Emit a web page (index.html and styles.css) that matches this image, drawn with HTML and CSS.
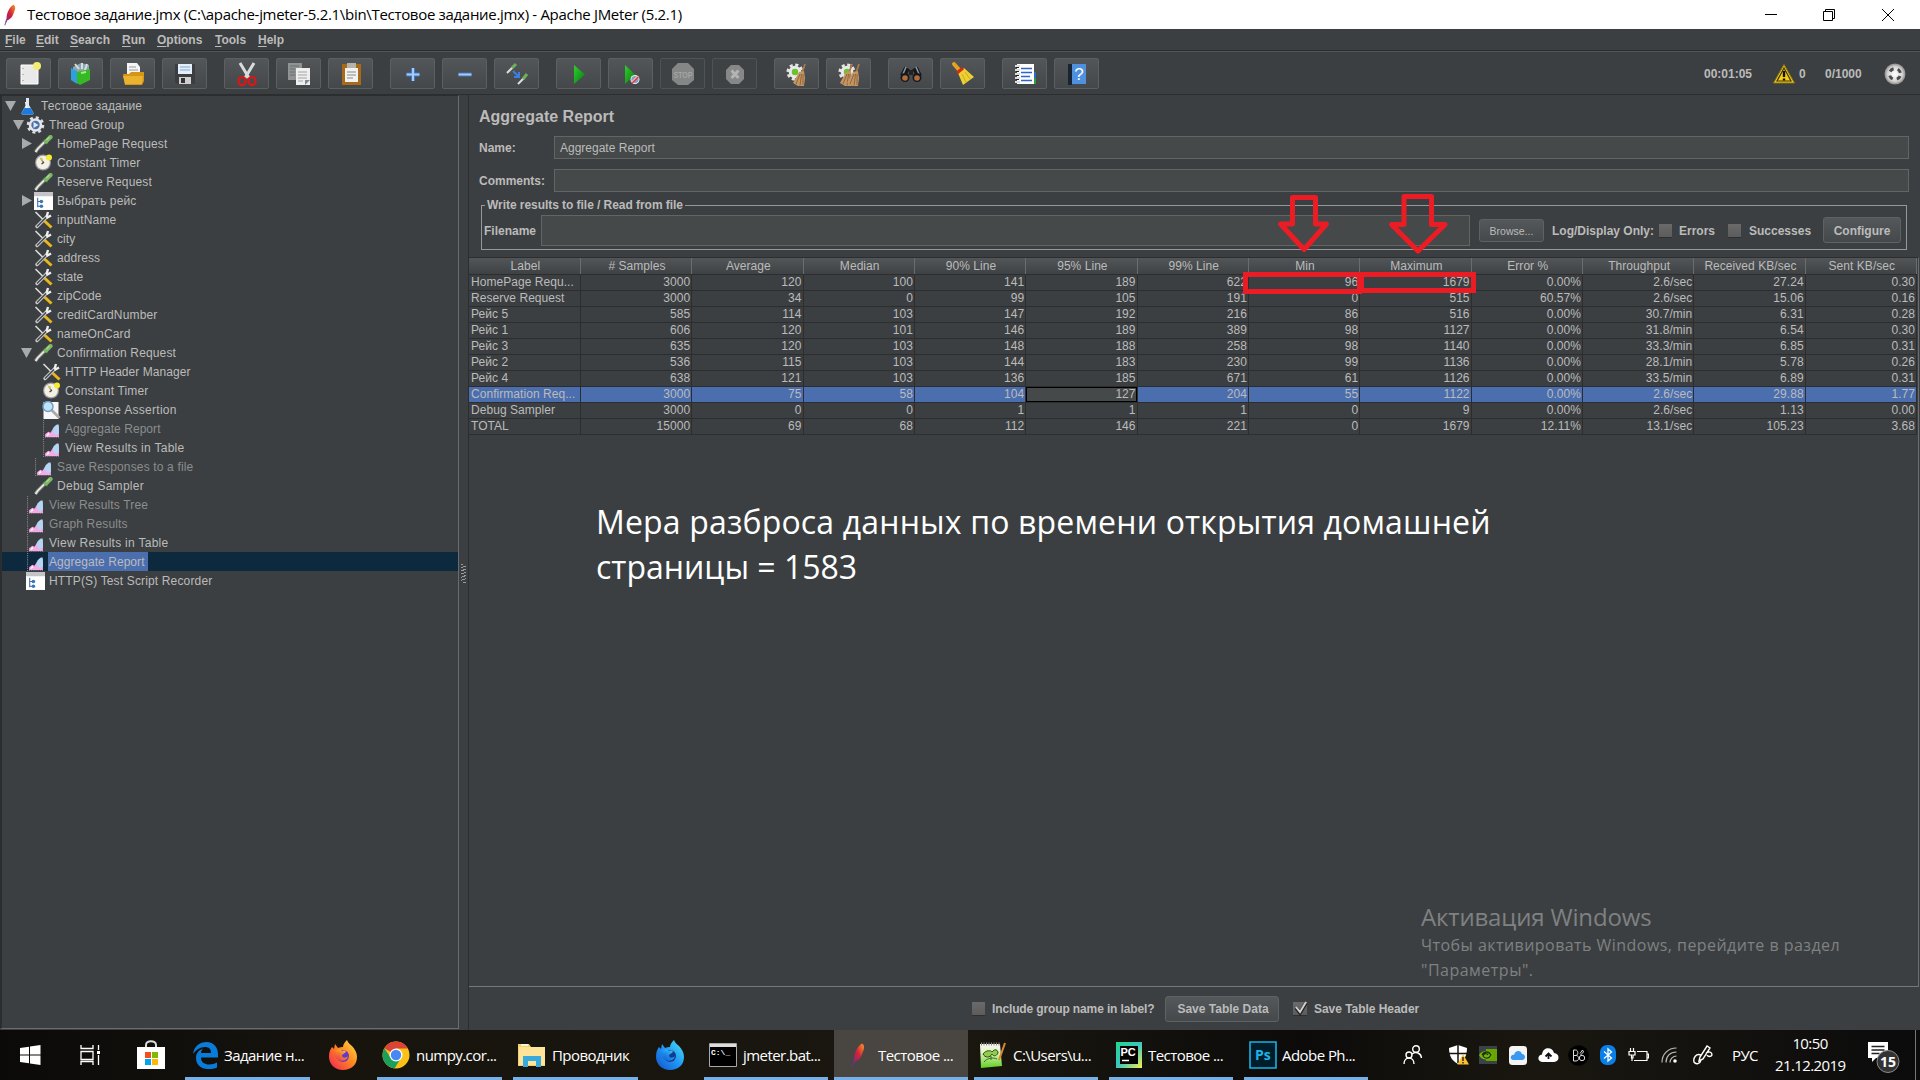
FILE: index.html
```html
<!DOCTYPE html>
<html lang="ru">
<head>
<meta charset="utf-8">
<title>Apache JMeter</title>
<link rel="stylesheet" href="styles.css">
</head>
<body>
<svg class="defs" width="0" height="0">
<defs>
<linearGradient id="gFeather" x1="0" y1="1" x2="1" y2="0"><stop offset="0" stop-color="#6b2d91"/><stop offset=".5" stop-color="#d3203a"/><stop offset="1" stop-color="#f79a23"/></linearGradient>
<linearGradient id="gGreen" x1="0" y1="0" x2="1" y2="1"><stop offset="0" stop-color="#2fd02f"/><stop offset="1" stop-color="#067a0c"/></linearGradient>
<linearGradient id="gFox" x1="1" y1="0" x2="0" y2="1"><stop offset="0" stop-color="#ffe14a"/><stop offset=".45" stop-color="#ff8a1e"/><stop offset="1" stop-color="#f01e5a"/></linearGradient>
<linearGradient id="gFoxDev" x1="1" y1="0" x2="0" y2="1"><stop offset="0" stop-color="#4fe6f0"/><stop offset=".5" stop-color="#1e96f5"/><stop offset="1" stop-color="#1550c8"/></linearGradient>
<linearGradient id="gNpp" x1="0" y1="0" x2="0" y2="1"><stop offset="0" stop-color="#f8faf2"/><stop offset=".35" stop-color="#e3f2c4"/><stop offset="1" stop-color="#5fd01c"/></linearGradient>
<linearGradient id="gPc" x1="0" y1="0" x2="1" y2="1"><stop offset="0" stop-color="#21d789"/><stop offset=".5" stop-color="#3cc7c0"/><stop offset="1" stop-color="#f6f14b"/></linearGradient>
<radialGradient id="gBall"><stop offset="0" stop-color="#fff"/><stop offset=".7" stop-color="#d4d4d4"/><stop offset="1" stop-color="#8a8a8a"/></radialGradient>
<symbol id="feather" viewBox="0 0 14 24"><path d="M2 22 3 16C3 10 6 3 11 0c2 1 3 4 1 8-2 6-4 9-8 10z" fill="url(#gFeather)"/><path d="M1 24 3 17" stroke="#6b2d91" stroke-width="1"/></symbol>
<symbol id="pipette" viewBox="0 0 18 18"><path d="M1 17 3 14 11 6" stroke="#8b9085" stroke-width="3.400" fill="none"/><path d="M1 17 3.500 13.500 11 6" stroke="#eee" stroke-width="1.500" fill="none"/><path d="M9 5 13 9" stroke="#3f7a35" stroke-width="2"/><path d="M11.500 6.500 16 2" stroke="#7fb568" stroke-width="4.200" stroke-linecap="round"/><path d="M12 5 15 2" stroke="#a9d98f" stroke-width="1.200"/></symbol>
<symbol id="tools" viewBox="0 0 18 18"><path d="M1 1 10 10" stroke="#ddd" stroke-width="1.600"/><path d="M10 10 17 16.500" stroke="#e8b71a" stroke-width="3"/><path d="M2.500 15.500 12 6" stroke="#c9c9c9" stroke-width="3.400" stroke-linecap="round"/><path d="M2.500 15.500 12 6" stroke="#44484a" stroke-width="1.400"/><path d="M12 7 16.500 4.500M12 6 13.500 1" stroke="#eee" stroke-width="2.400"/></symbol>
<symbol id="timer" viewBox="0 0 18 18"><circle cx="8.500" cy="8.500" r="8" fill="#9c98a4"/><circle cx="8.500" cy="8.500" r="6.800" fill="#f3f0e4"/><path d="M6 4 9 8.500 7 10" stroke="#444" stroke-width="1.300" fill="none"/><path d="M5 4 8 4 8.500 8z" fill="#d8c95a"/><circle cx="14.500" cy="3.500" r="3" fill="#f6ec32"/></symbol>
<symbol id="window" viewBox="0 0 18 17"><path d="M0 0h18v17H0z" fill="#fff"/><path d="M0 0h18v4H0z" fill="#c3c3c8"/><path d="M3.500 5.500v9M3.500 9h3M3.500 13.500h3" stroke="#3a6ea8"/><circle cx="7" cy="9" r="1.700" fill="#3878b8"/><circle cx="7" cy="13.500" r="1.700" fill="#3878b8"/></symbol>
<symbol id="listener" viewBox="0 0 16 17"><path d="M.5 0v16.500H15" stroke="#8a7f8a" stroke-dasharray="1 1" fill="none"/><path d="M2 16V13.500L5 11 7 12 9 9 11 12 15 8v8z" fill="#f5a9e6"/><path d="M9 9C10 6 12 4.500 14.500 4L15 6v7l-3 1.500-2-2z" fill="#b5d5f5"/><path d="M3 15 5 12 6 14z" fill="#fff"/></symbol>
<symbol id="assertion" viewBox="0 0 18 18"><path d="M1 1h15v17H1z" fill="#f7f7f7"/><path d="M9 9 17 17" stroke="#aaa" stroke-width="2.600"/><circle cx="5.500" cy="5.500" r="5" fill="#bfe3fa" stroke="#6d9bc0" stroke-width="1.400"/></symbol>
<symbol id="flask" viewBox="0 0 14 18"><path d="M5.500 1h3v7L13 16c0 1-.5 1.500-1.500 1.500h-9C1.500 17.500 1 17 1 16L5.500 8z" fill="#dfe9f3"/><path d="M4 11h6l3 5c0 1-.5 1.500-1.500 1.500h-9C1.500 17.500 1 17 1 16z" fill="#1d7be0"/><path d="M5 5 6 11" stroke="#fff"/></symbol>
<symbol id="gear" viewBox="0 0 18 18"><circle cx="9" cy="9" r="7.500" fill="none" stroke="#dcdfe3" stroke-width="2.600" stroke-dasharray="3 2.890"/><circle cx="9" cy="9" r="5.500" fill="#4a6ea8" stroke="#e4e6ea" stroke-width="2.600"/><path d="M7 6 12 9 7 12z" fill="#dbe9ff"/></symbol>
<symbol id="open" viewBox="0 0 12 12"><path d="M0 1H11L5.500 11z" fill="#a8aaab"/></symbol>
<symbol id="closed" viewBox="0 0 12 12"><path d="M1 0V11L11 5.500z" fill="#a8aaab"/></symbol>
<symbol id="broom" viewBox="0 0 14 24"><path d="M10 10 13 1" stroke="#a97a48" stroke-width="1.800"/><path d="M7 9 12 8 13 15 12 23 6 23 1 20z" fill="#c39764"/><path d="M8 11 4 21M9.500 11 8 22.500M11 11v11" stroke="#916539" stroke-width="1"/></symbol>
<symbol id="gear2" viewBox="0 0 20 20"><circle cx="10" cy="10" r="8" fill="none" stroke="#e6e6e6" stroke-width="3" stroke-dasharray="3.500 2.780"/><circle cx="10" cy="10" r="7" fill="#e9e9e9"/><circle cx="10" cy="10" r="3.600" fill="#6bc22c"/></symbol>
<symbol id="fox" viewBox="0 0 28 30"><path d="M18 0c1 3 3 4 5 6 3 3 5 7 5 11 0 8-6 13-14 13S0 24 0 17c0-5 1-7 3-10l2 2 1-5 3 4c2-1 4-1 5-1 0-3 2-5 4-7z"/><circle cx="14" cy="16" r="6" fill="#6a35c9"/><path d="M5 12c2-3 6-3 8-1 2-1 4 0 4 1l-4 3c0 4 5 3 6 1-1 6-11 7-13 0z" opacity=".9"/></symbol>
<symbol id="foxdev" viewBox="0 0 28 30"><path d="M18 0c1 3 3 4 5 6 3 3 5 7 5 11 0 8-6 13-14 13S0 24 0 17c0-5 1-7 3-10l2 2 1-5 3 4c2-1 4-1 5-1 0-3 2-5 4-7z"/><circle cx="14" cy="16" r="6" fill="#123a92"/><path d="M5 12c2-3 6-3 8-1 2-1 4 0 4 1l-4 3c0 4 5 3 6 1-1 6-11 7-13 0z" opacity=".9"/></symbol>
</defs>
</svg>

<header class="titlebar">
  <svg class="app-icon" width="12" height="22"><use href="#feather"/></svg>
  <span class="app-title">Тестовое задание.jmx (C:\apache-jmeter-5.2.1\bin\Тестовое задание.jmx) - Apache JMeter (5.2.1)</span>
  <svg class="win-buttons" width="132" height="14" fill="none" stroke="#000"><path d="M1 6.500h12M59.500 3.500h9v9h-9zM61.500 3.500v-2h9v9h-2M118 1l12 12M130 1l-12 12"/></svg>
</header>

<nav class="menubar">
  <span class="m1"><u>F</u>ile</span><span class="m2"><u>E</u>dit</span><span class="m3"><u>S</u>earch</span><span class="m4"><u>R</u>un</span><span class="m5"><u>O</u>ptions</span><span class="m6"><u>T</u>ools</span><span class="m7"><u>H</u>elp</span>
</nav>

<div class="toolbar">
  <div class="group">
    <button><svg width="28" height="28"><path d="M6 5h17v19H6z" fill="#e9e9e9" stroke="#fff"/><path d="M8 8v14" stroke="#888" stroke-dasharray="1 5"/><circle cx="22" cy="6" r="4" fill="#f4ec74"/></svg></button>
    <button><svg width="28" height="28"><path d="M6 7 14 3l8 2v8H6z" fill="#8fa5ad"/><path d="M8 4 12 9M15 3v6M20 4l-2 6" stroke="#d5e0e2" stroke-width="2"/><path d="M4 8 10 11v13l-6-4z" fill="#2ea0dd"/><path d="M10 12 23 9v11l-10 5-3-2z" fill="#37b926"/><path d="M14 13 19 12" stroke="#a3ee7b" stroke-width="2" fill="none"/></svg></button>
    <button><svg width="28" height="28"><path d="M8 3h10l3 4v9H8z" fill="#f5f5f5"/><path d="M10 7h7M10 10h9" stroke="#999"/><path d="M4 14h6l2-2h13v9l-2 4H6z" fill="#d69512"/><path d="M4 16h20l-1 8H6z" fill="#eab22e"/></svg></button>
    <button><svg width="28" height="28"><path d="M4 4h20v20H6l-2-2z" fill="#3b3d40"/><path d="M7 4h14v10H7z" fill="#e3eefa"/><path d="M9 7h10M9 10h10" stroke="#86a9cc"/><path d="M8 17h12v7H8z" fill="#cfcfcf"/><path d="M10 18h4v5h-4z" fill="#333"/></svg></button>
  </div>
  <div class="group">
    <button><svg width="28" height="28"><path d="M7 3 16 18M21 3 12 18" stroke="#d9dcdc" stroke-width="3"/><ellipse cx="9" cy="21" rx="3.500" ry="4" fill="none" stroke="#d11a1a" stroke-width="2.500"/><ellipse cx="19" cy="21" rx="3.500" ry="4" fill="none" stroke="#d11a1a" stroke-width="2.500"/></svg></button>
    <button><svg width="28" height="28"><path d="M3 3h14v17H3z" fill="#8f9394"/><path d="M11 8h14v17H11z" fill="#efefef"/><path d="M5 6h9M5 9h5M5 12h5M5 15h5" stroke="#6b6f70"/><path d="M13 12h9M13 15h9M13 18h9M13 21h5" stroke="#a3a3a3"/><path d="M20 25v-5h5z" fill="#888"/></svg></button>
    <button><svg width="28" height="28"><path d="M5 4h19v21H5z" fill="#a96a18"/><path d="M8 8h13v14H8z" fill="#f2f2f2"/><path d="M10 12h9M10 15h9M10 18h6" stroke="#888"/><path d="M10 3h9v5h-9z" fill="#b4b4aa"/></svg></button>
  </div>
  <div class="group">
    <button><svg width="28" height="28"><path d="M14 8v13M7.500 14.500h13" stroke="#4179c5" stroke-width="4"/><path d="M14 8v13M7.500 14.500h13" stroke="#a5cbf7" stroke-width="2"/></svg></button>
    <button><svg width="28" height="28"><path d="M7.500 14.500h13" stroke="#4179c5" stroke-width="4"/><path d="M7.500 14.500h13" stroke="#a5cbf7" stroke-width="2"/></svg></button>
    <button><svg width="28" height="28"><path d="M4 13 12 5" stroke="#ddd" stroke-width="2"/><path d="M9 8 13 4" stroke="#6fae5a" stroke-width="3"/><path d="M15 24 22 17" stroke="#ddd" stroke-width="2"/><path d="M20 19 24 14" stroke="#6fae5a" stroke-width="3"/><path d="M10 11 15 16M16 12v5h-5" stroke="#3b7fe0" stroke-width="2" fill="none"/></svg></button>
  </div>
  <div class="group">
    <button><svg width="28" height="28"><path d="M9 5 20 14.500 9 24z" fill="url(#gGreen)"/></svg></button>
    <button><svg width="28" height="28"><path d="M8 5 18 14.500 8 24z" fill="url(#gGreen)"/><circle cx="18" cy="19.500" r="4.500" fill="#eee"/><circle cx="18" cy="19.500" r="3.600" fill="#7ba0ca"/><path d="M15 22.500 21 16.500" stroke="#e33" stroke-width="2.400"/><path d="M14.500 22 20.500 16" stroke="#fff"/></svg></button>
    <button class="off"><svg width="28" height="28"><path d="M9 3h10l6 6v11l-6 5H9l-6-5V9z" fill="#858686"/><text x="14" y="18" class="stop-label" textLength="19" lengthAdjust="spacingAndGlyphs">STOP</text></svg></button>
    <button class="off"><svg width="28" height="28"><path d="M10 5h8l5 5v9l-5 5h-8l-5-5v-9z" fill="#868787"/><path d="M10.500 10.500 17.500 18M17.500 10.500 10.500 18" stroke="#b4b4b4" stroke-width="3"/></svg></button>
  </div>
  <div class="group">
    <button><svg width="28" height="28"><use href="#gear2" x="3" y="3" width="18" height="18"/><use href="#broom" x="9" y="3" width="14" height="24"/></svg></button>
    <button><svg width="28" height="28"><use href="#gear2" x="3" y="3" width="18" height="18"/><use href="#broom" x="4" y="3" width="14" height="24"/><use href="#broom" x="11" y="3" width="14" height="24"/></svg></button>
  </div>
  <div class="group">
    <button><svg width="28" height="28"><path d="M10 8 6 16M18 8 22 16" stroke="#15171a" stroke-width="6"/><path d="M9 7 6 14M19 7 22 14" stroke="#8d98a5" stroke-width="1.500"/><path d="M12 10h4v5h-4z" fill="#222"/><circle cx="8" cy="17.500" r="4.500" fill="#16181b"/><circle cx="20" cy="17.500" r="4.500" fill="#16181b"/><circle cx="8" cy="18" r="2.800" fill="#b06c39"/><circle cx="20" cy="18" r="2.800" fill="#b06c39"/></svg></button>
    <button><svg width="28" height="28"><path d="M5 4 11 11" stroke="#e6a31d" stroke-width="4" stroke-linecap="round"/><path d="M9 13 15 8 25 17 14 25z" fill="#efd032"/><path d="M8 13 14 8" stroke="#d02a18" stroke-width="3"/><path d="M13 14 17 22M16 12 21 19" stroke="#c9aa1d"/></svg></button>
  </div>
  <div class="group">
    <button><svg width="28" height="28"><path d="M22 12h3v12h-3z" fill="#2c6cc4"/><path d="M22 18h3v6h-3z" fill="#2da035"/><path d="M6 4h17v20H6z" fill="#fff"/><path d="M10 8.500h11M10 12.500h11M10 16.500h9M10 20.500h11" stroke="#2e65c8" stroke-width="1.400"/><path d="M4 6h5M4 10h5M4 14h5M4 18h5M4 22h5" stroke="#ddd" stroke-width="2"/><path d="M5 7.500h3M5 11.500h3M5 15.500h3M5 19.500h3" stroke="#222"/></svg></button>
    <button><svg width="28" height="28"><path d="M5 4h4v21H5z" fill="#182334"/><path d="M9 4h14v20H9z" fill="#4f90df"/><text x="16" y="20" class="help-label">?</text></svg></button>
  </div>
  <div class="status">
    <span class="elapsed">00:01:05</span>
    <svg class="warn" width="24" height="22"><path d="M12 1.500 22.500 20h-21z" fill="#f6cd17" stroke="#8a7515"/><path d="M12 5 19 18H5z" fill="none" stroke="#3b330a" stroke-width="1.200"/><path d="M12 8v6M12 15.500v2" stroke="#111" stroke-width="2.400"/></svg>
    <span class="errors">0</span>
    <span class="threads">0/1000</span>
    <svg class="ball" width="22" height="22"><circle cx="11" cy="11" r="10.500" fill="url(#gBall)"/><circle cx="11" cy="11" r="5.500" fill="none" stroke="#4b4b4b" stroke-width="3" stroke-dasharray="4.300 4.340" stroke-dashoffset="-2.200"/></svg>
  </div>
</div>

<main class="main">
  <aside class="tree">
    <div class="node d0"><svg class="tw"><use href="#open"/></svg><svg class="ic"><use href="#flask"/></svg><span>Тестовое задание</span></div>
    <div class="node d1"><svg class="tw"><use href="#open"/></svg><svg class="ic"><use href="#gear"/></svg><span>Thread Group</span></div>
    <div class="node d2"><svg class="tw"><use href="#closed"/></svg><svg class="ic"><use href="#pipette"/></svg><span class="wide">HomePage Request</span></div>
    <div class="node d2"><i class="tw"></i><svg class="ic"><use href="#timer"/></svg><span class="wide">Constant Timer</span></div>
    <div class="node d2"><i class="tw"></i><svg class="ic"><use href="#pipette"/></svg><span class="wide">Reserve Request</span></div>
    <div class="node d2"><svg class="tw"><use href="#closed"/></svg><svg class="ic"><use href="#window"/></svg><span class="wide">Выбрать рейс</span></div>
    <div class="node d2"><i class="tw"></i><svg class="ic"><use href="#tools"/></svg><span class="wide">inputName</span></div>
    <div class="node d2"><i class="tw"></i><svg class="ic"><use href="#tools"/></svg><span>city</span></div>
    <div class="node d2"><i class="tw"></i><svg class="ic"><use href="#tools"/></svg><span>address</span></div>
    <div class="node d2"><i class="tw"></i><svg class="ic"><use href="#tools"/></svg><span>state</span></div>
    <div class="node d2"><i class="tw"></i><svg class="ic"><use href="#tools"/></svg><span>zipCode</span></div>
    <div class="node d2"><i class="tw"></i><svg class="ic"><use href="#tools"/></svg><span class="wide">creditCardNumber</span></div>
    <div class="node d2"><i class="tw"></i><svg class="ic"><use href="#tools"/></svg><span class="wide">nameOnCard</span></div>
    <div class="node d2"><svg class="tw"><use href="#open"/></svg><svg class="ic"><use href="#pipette"/></svg><span class="wide">Confirmation Request</span></div>
    <div class="node d3"><i class="tw"></i><svg class="ic"><use href="#tools"/></svg><span>HTTP Header Manager</span></div>
    <div class="node d3"><i class="tw"></i><svg class="ic"><use href="#timer"/></svg><span class="wide">Constant Timer</span></div>
    <div class="node d3"><i class="tw"></i><svg class="ic"><use href="#assertion"/></svg><span class="wider">Response Assertion</span></div>
    <div class="node d3 dim"><i class="tw"></i><svg class="ic"><use href="#listener"/></svg><span>Aggregate Report</span></div>
    <div class="node d3"><i class="tw"></i><svg class="ic"><use href="#listener"/></svg><span class="wider">View Results in Table</span></div>
    <div class="node d2 dim"><i class="tw"></i><svg class="ic"><use href="#listener"/></svg><span class="wide">Save Responses to a file</span></div>
    <div class="node d2"><i class="tw"></i><svg class="ic"><use href="#pipette"/></svg><span class="wider">Debug Sampler</span></div>
    <div class="node d1 dim"><i class="tw"></i><svg class="ic"><use href="#listener"/></svg><span class="wide">View Results Tree</span></div>
    <div class="node d1 dim"><i class="tw"></i><svg class="ic"><use href="#listener"/></svg><span class="wide">Graph Results</span></div>
    <div class="node d1"><i class="tw"></i><svg class="ic"><use href="#listener"/></svg><span class="wider">View Results in Table</span></div>
    <div class="node d1 selected"><i class="tw"></i><svg class="ic"><use href="#listener"/></svg><span>Aggregate Report</span></div>
    <div class="node d1"><i class="tw"></i><svg class="ic"><use href="#window"/></svg><span class="wide">HTTP(S) Test Script Recorder</span></div>
  </aside>
  <div class="splitter"><i class="grip"></i></div>

  <section class="panel">
    <h1>Aggregate Report</h1>
    <label class="field"><span>Name:</span><b class="input">Aggregate Report</b></label>
    <label class="field"><span>Comments:</span><b class="input"></b></label>
    <fieldset>
      <legend>Write results to file / Read from file</legend>
      <span class="filename">Filename</span>
      <b class="input file"></b>
      <button class="btn browse">Browse...</button>
      <span class="log">Log/Display Only:</span>
      <i class="check"></i><span class="lbl errors-l">Errors</span>
      <i class="check"></i><span class="lbl succ-l">Successes</span>
      <button class="btn configure">Configure</button>
    </fieldset>

    <div class="scroll">
      <table>
        <thead><tr><th>Label<th># Samples<th>Average<th>Median<th>90% Line<th>95% Line<th>99% Line<th>Min<th>Maximum<th>Error %<th>Throughput<th>Received KB/sec<th>Sent KB/sec</tr></thead>
        <tbody>
        <tr><td>HomePage Requ...<td>3000<td>120<td>100<td>141<td>189<td>622<td>96<td>1679<td>0.00%<td>2.6/sec<td>27.24<td>0.30</tr>
        <tr><td>Reserve Request<td>3000<td>34<td>0<td>99<td>105<td>191<td>0<td>515<td>60.57%<td>2.6/sec<td>15.06<td>0.16</tr>
        <tr><td>Рейс 5<td>585<td>114<td>103<td>147<td>192<td>216<td>86<td>516<td>0.00%<td>30.7/min<td>6.31<td>0.28</tr>
        <tr><td>Рейс 1<td>606<td>120<td>101<td>146<td>189<td>389<td>98<td>1127<td>0.00%<td>31.8/min<td>6.54<td>0.30</tr>
        <tr><td>Рейс 3<td>635<td>120<td>103<td>148<td>188<td>258<td>98<td>1140<td>0.00%<td>33.3/min<td>6.85<td>0.31</tr>
        <tr><td>Рейс 2<td>536<td>115<td>103<td>144<td>183<td>230<td>99<td>1136<td>0.00%<td>28.1/min<td>5.78<td>0.26</tr>
        <tr><td>Рейс 4<td>638<td>121<td>103<td>136<td>185<td>671<td>61<td>1126<td>0.00%<td>33.5/min<td>6.89<td>0.31</tr>
        <tr class="current"><td>Confirmation Req...<td>3000<td>75<td>58<td>104<td class="focus">127<td>204<td>55<td>1122<td>0.00%<td>2.6/sec<td>29.88<td>1.77</tr>
        <tr><td>Debug Sampler<td>3000<td>0<td>0<td>1<td>1<td>1<td>0<td>9<td>0.00%<td>2.6/sec<td>1.13<td>0.00</tr>
        <tr><td>TOTAL<td>15000<td>69<td>68<td>112<td>146<td>221<td>0<td>1679<td>12.11%<td>13.1/sec<td>105.23<td>3.68</tr>
        </tbody>
      </table>
    </div>

    <footer class="actions">
      <i class="check"></i><span class="include">Include group name in label?</span>
      <button class="btn save">Save Table Data</button>
      <svg class="check on" width="16" height="16"><path d="M3 6 7 11 13 1" fill="none" stroke="#222" stroke-width="3.500"/><path d="M3 5 7 10 13 0" fill="none" stroke="#d0d0d0" stroke-width="2"/></svg><span class="header-l">Save Table Header</span>
    </footer>
  </section>
</main>

<svg class="marks" width="240" height="105" fill="none" stroke="#ec1c24" stroke-width="5" stroke-linejoin="round">
  <path d="M54.500 7.500h23v26.500h11L66 59.500 42.500 34h12zM166 6.500h27.500v28H207L180 61 153.500 34.500H166z"/>
  <path d="M7.500 84.500h114v17h-114zM123.500 84.500h112v16h-112z" stroke-linejoin="miter"/>
</svg>
<p class="note"><span class="n1">Мера разброса данных по времени открытия домашней</span><br><span class="n2">страницы = 1583</span></p>
<div class="watermark"><p class="w1">Активация Windows</p><p class="w2">Чтобы активировать Windows, перейдите в раздел</p><p class="w3">"Параметры".</p></div>

<div class="taskbar">
  <div class="tb start"><svg width="21" height="20" fill="#fff"><path d="M0 3 9 1.700V9.500H0zM10 1.500 20.500 0v9.500H10zM0 10.500h9v7.800L0 17zM10 10.500h10.500V20L10 18.500z"/></svg></div>
  <div class="tb view"><svg width="22" height="20" fill="none" stroke="#fff" stroke-width="1.300"><path d="M1 0v3.500h12V0M1 6.500h12v8H1zM1 20v-3.500h12V20M18.500 0v5M18.500 10v10"/><path d="M17 6h3v3h-3z" fill="#fff" stroke="none"/></svg></div>
  <div class="tb store"><svg width="30" height="30"><path d="M10 9V5c0-5 10-5 10 0v4" fill="none" stroke="#ddd" stroke-width="2"/><path d="M1 7h28v22H1z" fill="#fff"/><path d="M9 12h6v6H9z" fill="#f25022"/><path d="M16 12h6v6h-6z" fill="#7fba00"/><path d="M9 19h6v6H9z" fill="#00a4ef"/><path d="M16 19h6v6h-6z" fill="#ffb900"/></svg></div>
  <div class="tb task edge"><svg width="26" height="27"><path d="M0 12C1 4 7 0 13.500 0 21 0 25 6 25 12v3.500H8c0 5 4 7 8 7 3 0 6-1 8-2v5c-2 1-5 1.500-9 1.500-8 0-12-5-12-11 0-5 3-8 7-9.500-1 1-2 3-2 4.500h10c0-4-2-6-6-6C7 5 3 8 0 12z" fill="#0a7bd8"/></svg><span>Задание н...</span></div>
  <div class="tb ff"><svg width="28" height="30" fill="url(#gFox)"><use href="#fox"/></svg></div>
  <div class="tb task chrome"><svg width="28" height="28"><circle cx="14" cy="14" r="13.500" fill="#fbc116"/><path d="M14 14 2.300 7.200A13.500 13.500 0 0 1 25.700 7.500H14z" fill="#dc4437"/><path d="M2.300 7.200A13.500 13.500 0 0 0 12.500 27.400L19 17 9 17z" fill="#1c9f5a"/><circle cx="14" cy="14" r="6.500" fill="#fff"/><circle cx="14" cy="14" r="5.200" fill="#4688f4"/></svg><span>numpy.cor...</span></div>
  <div class="tb task explorer"><svg width="28" height="24"><path d="M0 1h11l2 3h14v19H0z" fill="#f6cf68"/><path d="M1 4h26v18H1z" fill="#fde49a"/><path d="M3 2h7" stroke="#fff" stroke-width="1.500"/><path d="M5 13h18v11h-5v-6h-8v6H5z" fill="#37a9dd"/></svg><span>Проводник</span></div>
  <div class="tb ffdev"><svg width="28" height="30" fill="url(#gFoxDev)"><use href="#foxdev"/></svg></div>
  <div class="tb task cmd"><svg width="28" height="24"><path d="M.5.5h27v23H.5z" fill="#000" stroke="#a8a8a8"/><path d="M1 1h26v3H1z" fill="#ddd"/><text x="2" y="12" class="cmd-label">C:\_</text></svg><span>jmeter.bat...</span></div>
  <div class="tb task active jm"><svg width="14" height="25"><use href="#feather"/></svg><span>Тестовое ...</span></div>
  <div class="tb task npp"><svg width="28" height="28"><path d="M1 3h20l2 22-21 2z" fill="url(#gNpp)"/><path d="M2 3h19" stroke="#888" stroke-width="3" stroke-dasharray="1 1.500"/><path d="M4 13c3-4 8-4 9-2 3-4 6-2 6 1-2 4-5 3-6 1-2 4-7 4-9 0z" fill="#8fcf48" stroke="#2d4a1c"/><path d="M5 21c3-4 9-5 13-3M12 15v4" fill="none" stroke="#3a6a1c"/><path d="M20 19 26 2" stroke="#d98b2b" stroke-width="2"/></svg><span>C:\Users\u...</span></div>
  <div class="tb task pc"><svg width="26" height="26"><path d="M0 0h26v26H0z" fill="url(#gPc)"/><path d="M4 4h18v18H4z" fill="#000"/><text x="4.500" y="14" class="pc-label">PC</text><path d="M6 18.500h7" stroke="#fff" stroke-width="1.500"/></svg><span>Тестовое ...</span></div>
  <div class="tb task ps"><svg width="28" height="28"><path d="M1 1h26v26H1z" fill="#001d2b" stroke="#18b1e0" stroke-width="1.600"/><text x="6" y="19" class="ps-label">Ps</text></svg><span>Adobe Ph...</span></div>

  <div class="tray">
    <svg class="t-people" width="20" height="20" fill="none" stroke="#fff" stroke-width="1.400"><circle cx="13" cy="4" r="3.300"/><circle cx="6" cy="10" r="3"/><path d="M1 19c0-8 10-8 10 0M9 9c4-3 9-1 9.500 4"/></svg>
    <svg class="t-shield" width="20" height="20"><path d="M9 0 18 3c0 8-3 13-9 16C3 16 0 11 0 3z" fill="#fff"/><path d="M9 0v18M0 8.500h18" stroke="#16130e" stroke-width="1.500"/><path d="M14 9 20 19.500H8.500z" fill="#fbc02d"/><path d="M14 12v4M14 17v1.500" stroke="#222" stroke-width="1.400"/></svg>
    <svg class="t-nv" width="20" height="20"><path d="M1 1h18v18H1z" fill="#3b4149"/><path d="M8 4h11v12H8z" fill="#69a500"/><path d="M1 10c4-6 12-5 14 0-3 6-11 6-14 0z" fill="#76b900"/><path d="M4 10c2-4 7-4 9 0-2 4-6 4-8 1 1-3 4-3 5-1" fill="none" stroke="#1d3510" stroke-width="1.300"/></svg>
    <svg class="t-ic" width="18" height="19"><rect width="18" height="19" rx="3.500" fill="#f4f4f4"/><path d="M4 14c-4-1-2-6 1-5 1-5 7-5 8-1 4 0 4 6 0 6z" fill="#3a98ee"/></svg>
    <svg class="t-cloud" width="21" height="15"><path d="M5 14C-1 14-1 7 4 6.500 5-2 15-1 16 5c6 0 6 9 0 9z" fill="#fff"/><path d="M10.500 11V6M7.500 8.500l3-3 3 3" stroke="#111" stroke-width="1.800" fill="none"/></svg>
    <svg class="t-bo" width="21" height="21"><circle cx="10.500" cy="10.500" r="10.300" fill="#000"/><path d="M5.500 5v11h2.500c3.500 0 3.500-5 .5-5.500H5.500M8 10.500C10.500 10 10.500 5 7.500 5h-2" fill="none" stroke="#ddd"/><circle cx="14" cy="13" r="2.700" fill="none" stroke="#ddd"/><path d="M12 8.500 14.500 5l1 2-3 3" fill="none" stroke="#ddd"/></svg>
    <svg class="t-bt" width="16" height="20"><rect width="16" height="20" rx="7" fill="#0a7fe8"/><path d="M4 6.500 11.500 13 8 16V4l3.500 3L4 13.500" stroke="#fff" stroke-width="1.300" fill="none"/></svg>
    <svg class="t-bat" width="21" height="15" fill="none" stroke="#fff" stroke-width="1.200"><path d="M9 3.500h10v9H6M19.500 6h1v4h-1M2.500 0v3M5.500 0v3M1 3.500h6v3.500H5v3H3.500V7H1zM4 10v3"/></svg>
    <svg class="t-wifi" width="16" height="16" fill="none" stroke="#bbb" stroke-width="1.200"><path d="M1 15.500C1 7 7 1 15.500 1M5 15.500C5 9 9 5 15.500 5M9 15.500C9 12 12 9 15.500 9"/><circle cx="14" cy="14" r="1.800" fill="#fff" stroke="none"/></svg>
    <svg class="t-pen" width="21" height="20" fill="none" stroke="#fff" stroke-width="1.400"><path d="M6 16 7 12 14 1 17 3 10 14zM8 10c-5-2-8 3-7 7 2 3 6 2 7-2M13 8c3-2 6-1 6 2-1 2-4 2-5 0"/></svg>
    <span class="lang">РУС</span>
    <span class="clock">10:50<br>21.12.2019</span>
    <svg class="t-note" width="34" height="34"><path d="M0 3h20v16H8l-4 4v-4H0z" fill="#fff"/><path d="M3.500 7.500h13M3.500 11h13M3.500 14.500h8" stroke="#222" stroke-width="1.400"/><circle cx="20" cy="22.500" r="11" fill="#333" stroke="#8a8a8a"/><text x="20" y="27.500" class="badge-label">15</text></svg>
    <i class="peek"></i>
  </div>
</div>
</body>
</html>
```

FILE: styles.css
```css
*{box-sizing:border-box}
body{margin:0;width:1920px;height:1080px;overflow:hidden;background:#3c3f41;color:#bbb;font:12px/14px "Liberation Sans",Arial,sans-serif;display:flex;flex-direction:column;position:relative}
.defs{position:absolute}
svg{display:block;flex:none}
p,h1{margin:0;font-weight:normal}
button{font-family:inherit;padding:0;color:inherit}
span{white-space:nowrap}

.titlebar{height:29px;background:#fff;color:#000;display:flex;align-items:center;font:15px/20px "Open Sans","Noto Sans",sans-serif;padding:0 24px 0 4px;flex:none}
.app-title{margin:0 auto 2px 11px;letter-spacing:-.31px}

.menubar{height:23px;flex:none;display:flex;padding:4px 0 0 5px;font-weight:bold;border-bottom:1px solid #555;box-shadow:inset 0 -1px #2a2c2d}
.menubar span{flex:none}
.menubar u{text-underline-offset:2px}
.m1{width:31px}.m2{width:34px}.m3{width:52px}.m4{width:35px}.m5{width:58px}.m6{width:43px}

.toolbar{height:43px;flex:none;display:flex;align-items:flex-start;gap:17px;padding:6px 14px 0 6px;border-bottom:1px solid #2b2d2e}
.group{display:flex;gap:7px}
.group button{width:45px;height:31px;border:1px solid #5b5f60;border-radius:2px;background:linear-gradient(#525658,#44484a);display:flex;align-items:center;justify-content:center}
.group button.off{background:#3f4244;border-color:#4f5354}
.stop-label{font:bold 9px "Liberation Sans",sans-serif;fill:#a4a4a4;text-anchor:middle}
.help-label{font:17px "Liberation Sans",sans-serif;fill:#fff;text-anchor:middle}
.status{margin-left:auto;display:flex;align-items:center;height:31px;font-weight:bold}
.status span{padding-top:1px}
.elapsed{width:68px}.warn{margin-right:3px}.errors{width:26px}.threads{width:59px}

.main{flex:none;height:935px;display:flex}
.tree{width:459px;height:934px;border:1px solid #2b2d2e;border-left-width:2px;border-right-color:#6a6d6e;border-bottom-color:#6a6d6e}
.node{height:19px;display:flex;align-items:center}
.node span{padding:3px 3px 2px 1px;letter-spacing:.05px;height:19px}
.node span.wide{letter-spacing:.15px}
.node span.wider{letter-spacing:.28px}
.d0{padding-left:3px}.d1{padding-left:11px}.d2{padding-left:19px}.d3{padding-left:27px}
.tw{width:12px;height:12px;margin-right:1px;flex:none}
.ic{width:19px;height:18px;margin-right:3px}
.dim{color:#8b8d8e}
.selected{background:#0d293e}
.selected span{background:#4b6eaf}
.splitter{width:9px;display:flex;align-items:center;justify-content:center;padding-top:22px}
.grip{width:5px;height:19px;background:repeating-linear-gradient(160deg,#999 0 1px,#3c3f41 1px 3px)}

.panel{flex:1;border-left:1px solid #2b2d2e;display:flex;flex-direction:column;min-width:0}
h1{font:bold 16px/20px "Liberation Sans",sans-serif;margin:12px 0 9px 10px;height:20px}
.field{display:flex;align-items:center;height:23px;margin:0 11px 10px 10px;font-weight:bold}
.field span{width:75px}
.input{flex:1;height:23px;border:1px solid #646464;background:#45494a;font-weight:normal;padding:4px 5px}
fieldset{margin:-4px 13px 7px 12px;padding:0 5px 0 2px;height:52px;border:1px solid #979899;display:flex;align-items:flex-start;font-weight:bold;flex:none;min-width:0}
legend{padding:0 2px;margin-left:1px;height:14px;line-height:15px;letter-spacing:-.05px}
.filename{width:57px;margin-top:12px}
.input.file{height:31px;margin-top:3px}
.btn{border:1px solid #5e6263;border-radius:3px;background:linear-gradient(#54585a,#45494b);font-weight:bold;font-size:12px;flex:none}
.browse{width:65px;height:23px;margin:7px 8px 0 9px;font-weight:normal;font-size:10.500px}
.log{width:107px;margin-top:12px}
.check{width:13px;height:13px;flex:none;background:linear-gradient(#6a6a6a,#5c5c5c);box-shadow:0 1px #2d2f30;display:block}
fieldset .check{margin-top:12px}
.lbl{margin:12px 0 0 7px}
.errors-l{width:49px}.succ-l{width:74px;margin-left:8px}
.configure{width:78px;height:26px;margin-top:5px;padding-top:1px}

.scroll{flex:none;height:730px;margin-right:1px;border:1px solid #2b2d2e;border-left:0;border-right-color:#6a6d6e;border-bottom:1px solid #76797a;overflow:hidden}
table{border-collapse:collapse;table-layout:fixed;width:1448px}
th,td{padding:0;height:16px;line-height:15px;overflow:hidden;white-space:nowrap;border-right:1px solid #2b2d2e;border-bottom:1px solid #2b2d2e;text-align:right;padding-right:1px;letter-spacing:.05px}
th{font-weight:normal;text-align:center;line-height:14px;padding:1px 0 0 2px;background:linear-gradient(#525658,#3f4244);border-right-color:#6a6d6e}
td:first-child{text-align:left;padding-left:2px;letter-spacing:.05px}
.current td{background:#4b6eaf}
.current td.focus{background:#45494a;box-shadow:inset 0 0 0 1px #000}

.actions{height:43px;display:flex;align-items:center;padding:0 0 0 503px;font-weight:bold}
.include{margin-left:7px;width:173px;letter-spacing:-.13px}
.save{width:114px;height:26px;margin-right:14px;padding-left:2px}
.check.on{width:14px;height:13px;overflow:visible}
.header-l{margin-left:7px;letter-spacing:-.04px}

.marks{position:absolute;left:1238px;top:190px}
.note{position:absolute;left:596px;top:499px;color:#fff;font:32px/45px "Open Sans","Noto Sans",sans-serif}
.n1{letter-spacing:.16px}
.watermark{position:absolute;left:1421px;top:900px;color:#7f8182;font:16px/25px "Open Sans","Noto Sans",sans-serif;white-space:nowrap}
.w1{font-size:24px;line-height:33px;letter-spacing:-.16px}
.w2{letter-spacing:.45px}
.w3{letter-spacing:.5px}

.taskbar{position:absolute;left:0;top:1030px;width:1920px;height:50px;background:linear-gradient(90deg,#0b0a09,#17140e 18%,#1a1710 50%,#0c0b0a 68%,#1a1710 80%,#0b0b0c);color:#fff;font:15px/20px "Open Sans","Noto Sans",sans-serif;display:flex}
.tb{height:50px;display:flex;align-items:center;flex:none}
.tb span{letter-spacing:-.55px;margin-left:6px}
.task{border-bottom:3px solid #76b0e6;padding:3px 0 0 5px}
.start{width:80px;padding-left:20px}
.view{width:56px}
.store{width:49px}
.edge{width:125px;padding-left:8px;margin-right:19px}
.edge span{margin-left:5px}
.ff{width:48px}
.chrome{width:125px;margin-right:11px}
.explorer{width:125px;margin-right:18px}
.ffdev{width:48px}
.cmd{width:124px;margin-right:6px}
.jm{width:134px;margin-right:6px;padding-left:17px}
.jm span{margin-left:13px}
.active{background:#494641}
.npp{width:124px;margin-right:11px}
.pc{width:124px;margin-right:11px;padding-left:7px}
.ps{width:124px}
.ps span{margin-left:5px}
.cmd-label{font:bold 8px "Liberation Mono",monospace;fill:#fff}
.pc-label{font:bold 11px "Liberation Sans",sans-serif;fill:#fff}
.ps-label{font:bold 14px "Open Sans",sans-serif;fill:#1cb4e8}
.badge-label{font:bold 14px "Open Sans",sans-serif;fill:#fff;text-anchor:middle}
.tray{display:flex;align-items:center;margin-left:35px}
.t-people{margin-right:26px}
.t-shield{margin-right:9px}
.t-nv{margin-right:11px}
.t-ic{margin-right:11px}
.t-cloud{margin-right:9px}
.t-bo{margin-right:11px}
.t-bt{margin-right:12px}
.t-bat{margin-right:12px}
.t-wifi{margin-right:16px}
.t-pen{margin-right:18px}
.lang{width:43px;letter-spacing:-.6px}
.clock{width:70px;text-align:center;line-height:22px;letter-spacing:-.6px;margin:-2px 23px 0 0}
.t-note{margin-right:13px;margin-top:2px}
.peek{width:1px;height:50px;background:#777}
```
